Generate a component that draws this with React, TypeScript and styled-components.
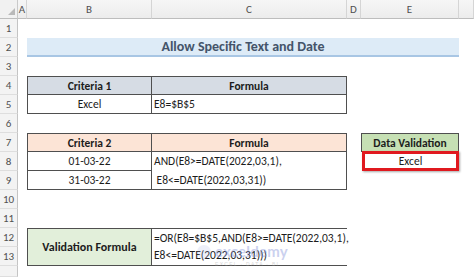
import React from "react";
import styled, { createGlobalStyle } from "styled-components";

const Global = createGlobalStyle`
  html, body { margin: 0; padding: 0; background: #ffffff; }
  body { font-family: Carlito, Lato, "Liberation Sans", sans-serif; }
`;

const FONT = `Carlito, Lato, "Liberation Sans", sans-serif`;

const Sheet = styled.div`
  position: relative;
  width: 474px;
  height: 277px;
  overflow: hidden;
  display: grid;
  grid-template-columns: 18px 9px 125px 195px 14px 98px 1fr;
  grid-template-rows: 19px repeat(13, 19px) 1fr;
  background: #ffffff;
  font-family: ${FONT};
  font-size: 11.5px;
  color: #1c1c1c;
`;

const Corner = styled.div`
  grid-column: 1 / 2;
  grid-row: 1 / 2;
  position: relative;
  background: #f1f1f1;
  border-right: 1px solid #c9c9c9;
  border-bottom: 1px solid #bdbdbd;
  box-sizing: border-box;
  &::after {
    content: "";
    position: absolute;
    right: 2px;
    bottom: 3px;
    width: 0;
    height: 0;
    border-left: 7px solid transparent;
    border-bottom: 7px solid #b9b9b9;
  }
`;

const ColHead = styled.div<{ $col: number }>`
  grid-column: ${(p) => p.$col} / ${(p) => p.$col + 1};
  grid-row: 1 / 2;
  box-sizing: border-box;
  background: linear-gradient(#f6f6f6, #ececec);
  border-right: 1px solid #d5d5d5;
  border-bottom: 1px solid #bdbdbd;
  display: flex;
  align-items: center;
  justify-content: center;
  color: #505050;
  font-size: 11px;
`;

const RowHead = styled.div<{ $row: number }>`
  grid-column: 1 / 2;
  grid-row: ${(p) => p.$row} / ${(p) => p.$row + 1};
  box-sizing: border-box;
  background: #f3f3f3;
  border-right: 1px solid #c4c4c4;
  border-bottom: 1px solid #dedede;
  display: flex;
  align-items: center;
  justify-content: center;
  color: #505050;
  font-size: 11px;
`;

const Title = styled.div`
  grid-column: 3 / 7;
  grid-row: 3 / 4;
  box-sizing: border-box;
  background: #ddebf7;
  border-bottom: 2px solid #a8c6e4;
  display: flex;
  align-items: center;
  justify-content: center;
  font-size: 14px;
  font-weight: 700;
  color: #44546a;
`;

const Block = styled.div<{ $col: string; $row: string; $rows: number }>`
  grid-column: ${(p) => p.$col};
  grid-row: ${(p) => p.$row};
  box-sizing: border-box;
  border: 1px solid #4f4f4f;
  display: grid;
  grid-template-columns: 124px 1fr;
  grid-template-rows: repeat(${(p) => p.$rows}, 1fr);
`;

const Cell = styled.div<{
  $fill?: string;
  $bold?: boolean;
  $left?: boolean;
  $right?: boolean;
  $bottom?: boolean;
  $span?: number;
  $size?: number;
}>`
  box-sizing: border-box;
  grid-row: span ${(p) => p.$span ?? 1};
  background: ${(p) => p.$fill ?? "#ffffff"};
  border-right: ${(p) => (p.$right ? "1px solid #4f4f4f" : "none")};
  border-bottom: ${(p) => (p.$bottom ? "1px solid #4f4f4f" : "none")};
  display: flex;
  align-items: center;
  justify-content: ${(p) => (p.$left ? "flex-start" : "center")};
  padding-left: ${(p) => (p.$left ? "2px" : "0")};
  font-weight: ${(p) => (p.$bold ? 700 : 400)};
  font-size: ${(p) => p.$size ?? 11.5}px;
  color: #1c1c1c;
  white-space: nowrap;
`;

const Lines = styled.div<{ $lh: number }>`
  display: flex;
  flex-direction: column;
  line-height: ${(p) => p.$lh}px;
  white-space: pre;
`;

const Validation = styled.div`
  grid-column: 6 / 7;
  grid-row: 8 / 10;
  display: flex;
  flex-direction: column;
`;

const DVHead = styled.div`
  box-sizing: border-box;
  height: 19px;
  background: #c6e0b4;
  border: 1px solid #4f4f4f;
  display: flex;
  align-items: center;
  justify-content: center;
  font-weight: 700;
  font-size: 11.5px;
`;

const DVValue = styled.div`
  box-sizing: border-box;
  height: 20px;
  margin-top: -1px;
  margin-left: 1px;
  background: #ffffff;
  border: 3px solid #e0191f;
  box-shadow: 1px 1px 2px rgba(0, 0, 0, 0.35);
  display: flex;
  align-items: center;
  justify-content: center;
  font-size: 11.5px;
`;

const Watermark = styled.div`
  position: absolute;
  left: 196px;
  top: 244px;
  display: flex;
  align-items: flex-start;
  gap: 3px;
  pointer-events: none;
  opacity: 0.4;
`;

const MarkText = styled.div`
  display: flex;
  flex-direction: column;
  align-items: flex-start;
`;

const MarkWord = styled.span`
  font-family: Lato, "Liberation Sans", sans-serif;
  font-size: 15px;
  font-weight: 700;
  line-height: 15px;
  color: #7f8fd9;
  letter-spacing: 0.2px;
`;

const MarkSub = styled.span`
  font-family: "Liberation Sans", sans-serif;
  font-size: 5px;
  letter-spacing: 1.3px;
  color: #9a9a9a;
  margin-top: 2px;
`;

const cols = ["A", "B", "C", "D", "E", ""];

export default function App() {
  return (
    <>
      <Global />
      <Sheet>
        <Corner />
        {cols.map((c, i) => (
          <ColHead key={i} $col={i + 2}>
            {c}
          </ColHead>
        ))}
        {Array.from({ length: 14 }, (_, i) => (
          <RowHead key={i} $row={i + 2}>
            {i < 13 ? i + 1 : ""}
          </RowHead>
        ))}

        <Title>Allow Specific Text and Date</Title>

        <Block $col="3 / 5" $row="5 / 7" $rows={2}>
          <Cell $fill="#d6dce4" $bold $right $bottom>Criteria 1</Cell>
          <Cell $fill="#d6dce4" $bold $bottom>Formula</Cell>
          <Cell $right>Excel</Cell>
          <Cell $left>E8=$B$5</Cell>
        </Block>

        <Block $col="3 / 5" $row="8 / 11" $rows={3}>
          <Cell $fill="#fce4d6" $bold $right $bottom>Criteria 2</Cell>
          <Cell $fill="#fce4d6" $bold $bottom>Formula</Cell>
          <Cell $right $bottom>01-03-22</Cell>
          <Cell $left $span={2}>
            <Lines $lh={19}>
              <span>AND(E8&gt;=DATE(2022,03,1),</span>
              <span> E8&lt;=DATE(2022,03,31))</span>
            </Lines>
          </Cell>
          <Cell $right>31-03-22</Cell>
        </Block>

        <Validation>
          <DVHead>Data Validation</DVHead>
          <DVValue>Excel</DVValue>
        </Validation>

        <Block $col="3 / 5" $row="13 / 15" $rows={1}>
          <Cell $fill="#e2efda" $bold $right $size={12}>Validation Formula</Cell>
          <Cell $left>
            <Lines $lh={17}>
              <span>=OR(E8=$B$5,AND(E8&gt;=DATE(2022,03,1),</span>
              <span>E8&lt;=DATE(2022,03,31)))</span>
            </Lines>
          </Cell>
        </Block>

        <Watermark>
          <svg width="16" height="16" viewBox="0 0 16 16">
            <circle cx="8" cy="8" r="7" fill="#aab4e6" opacity="0.5" />
          </svg>
          <MarkText>
            <MarkWord>exceldemy</MarkWord>
            <MarkSub>EXCEL · DATA · BI</MarkSub>
          </MarkText>
        </Watermark>
      </Sheet>
    </>
  );
}
